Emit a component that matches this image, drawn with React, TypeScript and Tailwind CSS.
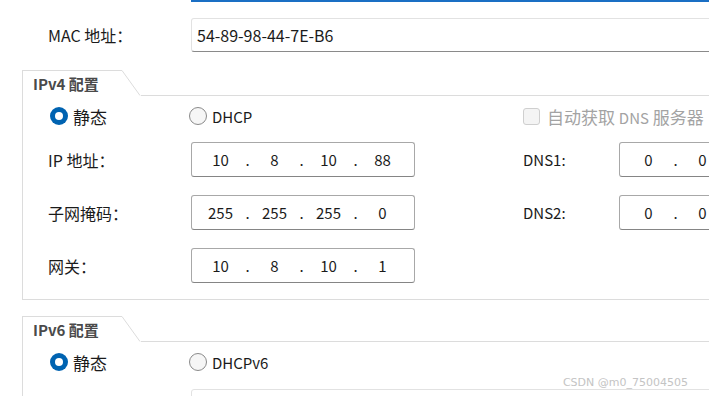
import React from "react";

const Radio = ({ checked, label }: { checked?: boolean; label: string }) => (
  <div className="flex items-center gap-[5px]">
    {checked ? (
      <div className="w-[18px] h-[18px] rounded-full bg-[#0063b1] flex items-center justify-center">
        <div className="w-[8px] h-[8px] rounded-full bg-white" />
      </div>
    ) : (
      <div className="w-[18px] h-[18px] rounded-full border border-[#8a8a8a] bg-[#f6f6f6]" />
    )}
    <span className={label.match(/[A-Z]/) ? "text-[15px] text-[#1b1b1b]" : "text-[17px] text-[#1b1b1b]"}>{label}</span>
  </div>
);

const IpBox = ({ parts }: { parts: string[] }) => (
  <div className="w-[224px] h-[35px] shrink-0 border border-[#a8a8a8] border-b-[#858585] rounded-[3px] bg-white flex items-center pl-[6px] text-[15px] text-[#1b1b1b]">
    {parts.map((p, i) => (
      <React.Fragment key={i}>
        {i > 0 && <span className="w-[9px] text-center">.</span>}
        <span className="w-[45px] text-center">{p}</span>
      </React.Fragment>
    ))}
  </div>
);

const GroupHeader = ({ title }: { title: string }) => (
  <div className="flex h-[26px]">
    <div className="w-[100px] h-full border-l border-t border-[#dcdcdc] pl-[10px] flex items-center font-bold text-[15px] text-[#4a4a4a]">
      {title}
    </div>
    <svg width="19" height="26" className="shrink-0">
      <line x1="0" y1="0.5" x2="18" y2="25.5" stroke="#dcdcdc" strokeWidth="1" />
    </svg>
    <div className="flex-1 border-b border-[#dcdcdc]" />
  </div>
);

const Row = ({ label, ip, dnsLabel, dns }: { label: string; ip: string[]; dnsLabel?: string; dns?: string[] }) => (
  <div className="flex items-center">
    <div className="w-[143px] shrink-0 text-[16px] text-[#1b1b1b]">{label}</div>
    <IpBox parts={ip} />
    {dnsLabel && dns && (
      <>
        <div className="w-[108px] shrink-0" />
        <div className="w-[96px] shrink-0 text-[15px] text-[#1b1b1b]">{dnsLabel}</div>
        <IpBox parts={dns} />
      </>
    )}
  </div>
);

export default function App() {
  return (
    <div className="w-[709px] h-[396px] overflow-hidden bg-white relative font-['Noto_Sans_CJK_SC',sans-serif] leading-none">
      <div className="h-[2px] ml-[191px] bg-[#1a6fc4]" />

      {/* MAC */}
      <div className="flex items-center pl-[48px] mt-[16px]">
        <div className="w-[143px] shrink-0 text-[16px] text-[#1b1b1b]">MAC 地址：</div>
        <div className="w-[700px] h-[34px] shrink-0 border border-[#e2e2e2] border-b-[#8a8a8a] rounded-[3px] flex items-center pl-[5px] text-[16px] text-[#1b1b1b]">
          54-89-98-44-7E-B6
        </div>
      </div>

      {/* IPv4 */}
      <div className="ml-[22px] mt-[18px] w-[900px]">
        <GroupHeader title="IPv4 配置" />
        <div className="border-l border-b border-[#dcdcdc] pl-[25px] pt-[8px] pb-[16px]">
          <div className="flex items-center h-6">
            <div className="w-[141px] pl-[2px]">
              <Radio checked label="静态" />
            </div>
            <div className="w-[334px]">
              <Radio label="DHCP" />
            </div>
            <div className="flex items-center gap-[7px]">
              <div className="w-[17px] h-[17px] rounded-[3px] border border-[#cfcfcf] bg-[#f4f4f4]" />
              <span className="text-[17px] text-[#a3a3a3]">
                自动获取 <span className="text-[15px]">DNS</span> 服务器
              </span>
            </div>
          </div>
          <div className="flex flex-col gap-[18px] mt-[14px]">
            <Row label="IP 地址：" ip={["10", "8", "10", "88"]} dnsLabel="DNS1:" dns={["0", "0", "", ""]} />
            <Row label="子网掩码：" ip={["255", "255", "255", "0"]} dnsLabel="DNS2:" dns={["0", "0", "", ""]} />
            <Row label="网关：" ip={["10", "8", "10", "1"]} />
          </div>
        </div>
      </div>

      {/* IPv6 */}
      <div className="ml-[22px] mt-[16px] w-[900px]">
        <GroupHeader title="IPv6 配置" />
        <div className="border-l border-[#dcdcdc] pl-[25px] pt-[8px]">
          <div className="flex items-center h-6">
            <div className="w-[141px] pl-[2px]">
              <Radio checked label="静态" />
            </div>
            <Radio label="DHCPv6" />
          </div>
          <div className="flex items-start mt-[15px]">
            <div className="w-[143px] shrink-0 pt-[8px] text-[16px] text-[#1b1b1b]">IPv6 地址：</div>
            <div className="w-[700px] h-[35px] shrink-0 border border-[#e2e2e2] rounded-[3px]" />
          </div>
        </div>
      </div>

      <div className="absolute right-[21px] top-[377px] font-['DejaVu_Sans',sans-serif] text-[11px] text-[#c4c4c4]">
        CSDN @m0_75004505
      </div>
    </div>
  );
}
